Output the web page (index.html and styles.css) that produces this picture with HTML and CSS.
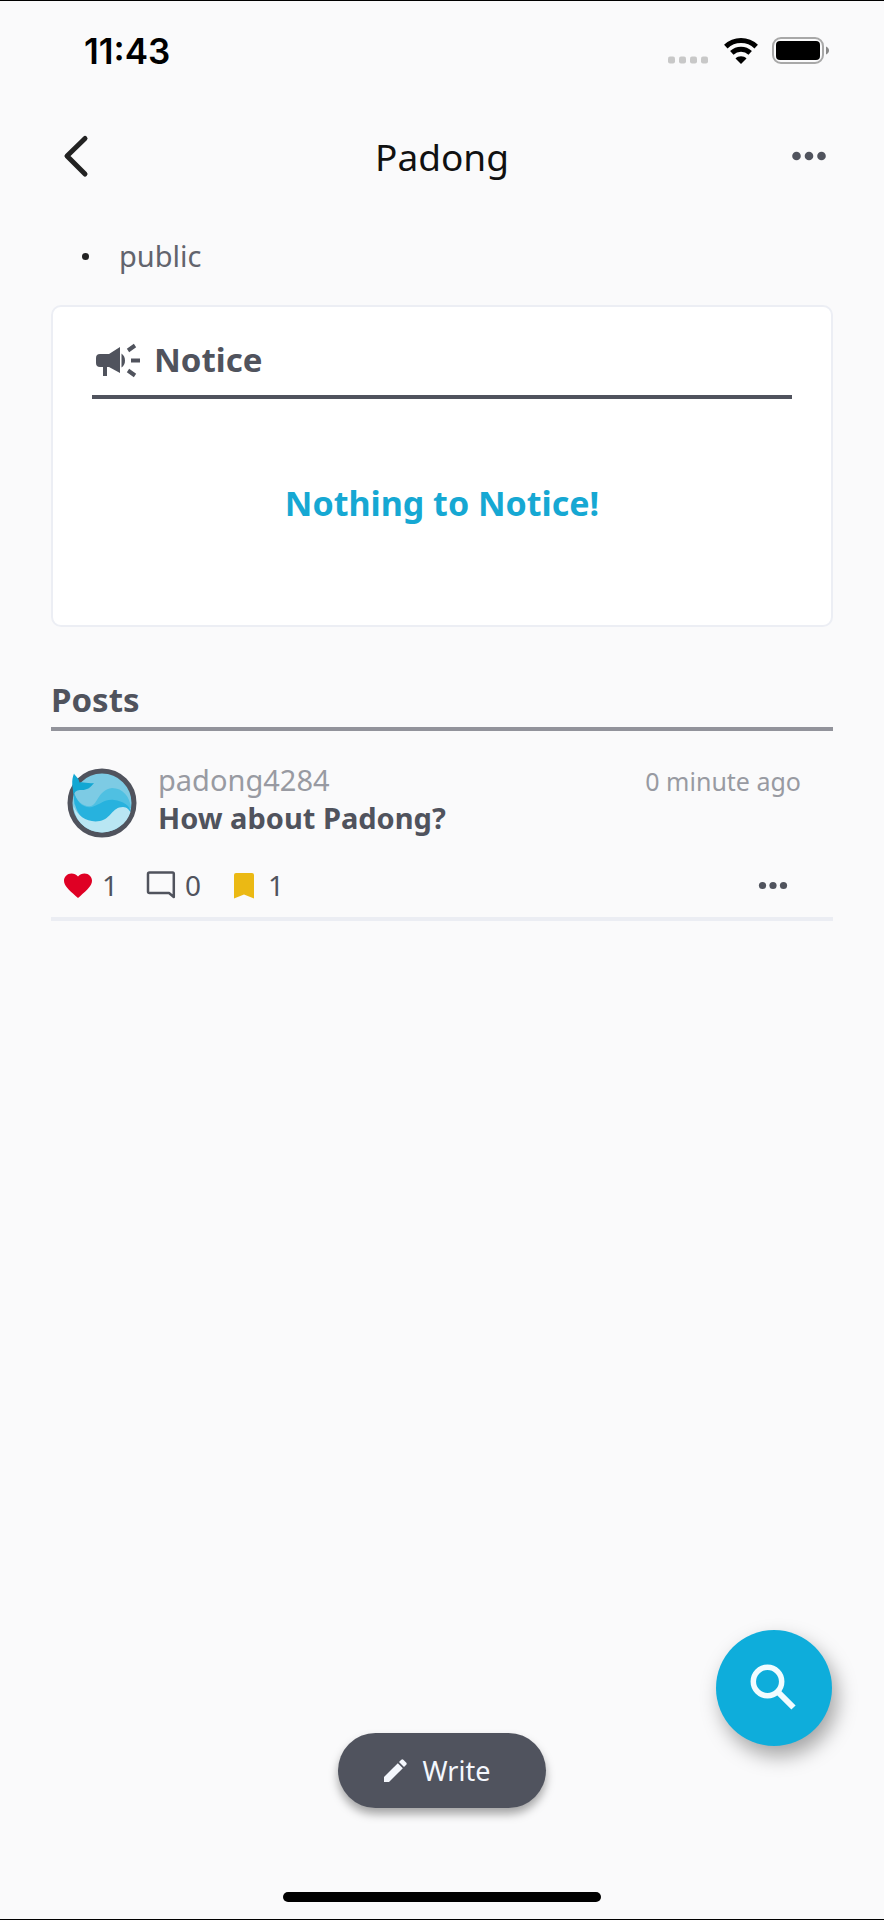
FILE: index.html
```html
<!DOCTYPE html>
<html lang="en">
<head>
<meta charset="utf-8">
<meta name="viewport" content="width=device-width, initial-scale=1">
<title>Padong</title>
<link rel="stylesheet" href="styles.css">
</head>
<body>
<div class="app">
  <div class="status-bar">
    <span class="clock">11:43</span>
    <div class="indicators">
      <svg class="cell" width="42" height="8" viewBox="0 0 42 8" fill="#c8c8c8" aria-hidden="true">
        <rect x="0" y="0.500" width="7" height="7" rx="2"/><rect x="11" y="0.500" width="7" height="7" rx="2"/><rect x="22" y="0.500" width="7" height="7" rx="2"/><rect x="33" y="0.500" width="7" height="7" rx="2"/>
      </svg>
      <svg width="34" height="26" viewBox="0 0 34 26" fill="none" stroke="#000" aria-hidden="true">
        <path d="M1.800 8.600A22 22 0 0 1 32.200 8.600" stroke-width="5"/>
        <path d="M7.800 14.900A13.500 13.500 0 0 1 26.200 14.900" stroke-width="5"/>
        <path d="M17 26L11.500 20.400C14 17.500 20 17.500 22.500 20.400Z" fill="#000" stroke="none"/>
      </svg>
      <svg class="battery" width="58" height="28" viewBox="0 0 58 28" aria-hidden="true">
        <rect x="1" y="1" width="50" height="25" rx="8" fill="none" stroke="#a8a8a8" stroke-width="2"/>
        <rect x="4" y="4" width="44" height="19" rx="4" fill="#000"/>
        <path d="M54 9.500C58 11 58 16 54 17.500Z" fill="#888"/>
      </svg>
    </div>
  </div>

  <header class="header">
    <button class="icon-button" type="button" aria-label="Back">
      <svg width="48" height="48" viewBox="0 0 48 48" fill="none" stroke="#222" stroke-width="5" stroke-linecap="round" stroke-linejoin="round"><path d="M34 6.500L16 24L34 42"/></svg>
    </button>
    <h1 class="title">Padong</h1>
    <button class="icon-button" type="button" aria-label="More options">
      <svg width="48" height="48" viewBox="0 0 48 48" fill="#50535d"><circle cx="11.500" cy="24" r="4.300"/><circle cx="24" cy="24" r="4.300"/><circle cx="36.500" cy="24" r="4.300"/></svg>
    </button>
  </header>

  <main class="content">
    <ul class="tags"><li class="tag">public</li></ul>

    <section class="notice">
      <h2 class="notice-title">
        <svg width="48" height="36" viewBox="-2 0 48 36" fill="#50535d" aria-hidden="true">
          <path d="M6 12H15L26 5V31L15 25H13V34H9V25H6Q2 25 2 21V16Q2 12 6 12Z"/>
          <path d="M27.500 11.500Q31 14 31 18.500Q31 23 27.500 25.500Z"/>
          <path d="M34 8.500L41 3.500M37 18.500H46M34 28.500L41 33.500" fill="none" stroke="#50535d" stroke-width="4"/>
        </svg>
        Notice
      </h2>
      <p class="notice-empty">Nothing to Notice!</p>
    </section>

    <section class="posts">
      <h2 class="posts-title">Posts</h2>
      <article class="post">
        <div class="post-head">
          <svg class="avatar" width="70" height="70" viewBox="0 0 70 70" aria-hidden="true">
            <circle cx="35" cy="35" r="32" fill="#7dcbe4" stroke="#50535d" stroke-width="5"/>
            <path d="M7 25C10 34 17 39 24 38C31 36 31 22 45 20C56 20 63 29 64 40C50 46 20 52 7 36Z" fill="#4fc0e2"/>
            <path d="M6.500 22C9 34 17 41 25 39C35 36 37 31 47 32C56 33 63 38 63.500 43C60 50 44 60 28 58C15 54 6 42 6.500 22Z" fill="#27b2de"/>
            <path d="M6.500 38C11 49 21 55 33 53C44 51 45 39 56 39C60 39 62 42 63.500 44C60 56 48 64 35 64.500C20 64 8 54 6.500 38Z" fill="#b9e6f3"/>
            <path d="M7 5.500C8 8 12 10 12.500 14.500C16 13.500 21 16 27 15C23 20 20 22 15 22C12 22 9 22 6.500 26C5.500 18 4 13 7 5.500Z" fill="#12a7d3"/>
          </svg>
          <div class="post-text">
            <div class="post-meta">
              <span class="author">padong4284</span>
              <time class="time">0 minute ago</time>
            </div>
            <h3 class="post-title">How about Padong?</h3>
          </div>
        </div>
        <div class="post-actions">
          <button class="action" type="button" aria-label="Likes: 1">
            <svg width="30" height="30" viewBox="0 0 30 30" fill="#df0024"><path d="M15 28L12.900 26.200C5.500 19.600 1 15.700 1 10.800C1 6.800 4.200 3.500 8.500 3.500C11 3.500 13.400 4.700 15 6.600C16.600 4.700 19 3.500 21.500 3.500C25.800 3.500 29 6.800 29 10.800C29 15.700 24.500 19.600 17.100 26.200Z"/></svg>
            <span>1</span>
          </button>
          <button class="action" type="button" aria-label="Comments: 0">
            <svg width="30" height="30" viewBox="0 0 30 30" fill="none" stroke="#50535d" stroke-width="2.500" stroke-linejoin="round"><path d="M3.500 2.500H26.500Q27.800 2.500 27.800 4V27L23 23H3.500Q2 23 2 21.500V4Q2 2.500 3.500 2.500Z"/></svg>
            <span>0</span>
          </button>
          <button class="action" type="button" aria-label="Bookmarks: 1">
            <svg width="30" height="30" viewBox="0 0 30 30" fill="#ebb914"><path d="M7 3H23Q25 3 25 5V28.500L15 24.500L5 28.500V5Q5 3 7 3Z"/></svg>
            <span>1</span>
          </button>
          <button class="action more" type="button" aria-label="Post options">
            <svg width="32" height="30" viewBox="0 0 32 30" fill="#50535d"><circle cx="5.500" cy="15.500" r="3.600"/><circle cx="16" cy="15.500" r="3.600"/><circle cx="26.500" cy="15.500" r="3.600"/></svg>
          </button>
        </div>
      </article>
    </section>
  </main>

  <footer class="footer">
    <button class="write" type="button">
      <svg width="28" height="28" viewBox="0 0 28 28" fill="#f4f7fd" aria-hidden="true"><path d="M3 20L16.800 6.200L21.800 11.200L8 25H3Z"/><path d="M18 5L20.300 2.700Q21.300 1.800 22.300 2.700L25.300 5.700Q26.200 6.700 25.300 7.700L23 10Z"/></svg>
      Write
    </button>
    <div class="home-indicator"></div>
  </footer>

  <button class="search-fab" type="button" aria-label="Search">
    <svg width="50" height="50" viewBox="0 0 50 50" fill="none" stroke="#f1fcff"><circle cx="18.500" cy="18.500" r="14.200" stroke-width="5.500"/><path d="M29 29L44.500 44.500" stroke-width="6"/></svg>
  </button>
</div>
</body>
</html>
```
FILE: styles.css
```css
* {
  box-sizing: border-box;
}

body,
h1,
h2,
h3,
p,
ul {
  margin: 0;
  padding: 0;
}

body {
  background: #fafafb;
  color: #50535d;
  font-family: "Noto Sans", "Noto Sans CJK KR", sans-serif;
}

button {
  padding: 0;
  border: 0;
  background: none;
  color: inherit;
  font: inherit;
  cursor: pointer;
}

svg {
  display: block;
  flex: none;
}

.app {
  display: flex;
  flex-direction: column;
  min-height: 100vh;
  border-top: 1px solid #000;
  border-bottom: 1px solid #000;
}

.status-bar {
  display: flex;
  align-items: center;
  justify-content: space-between;
  height: 100px;
  padding: 0 54px 0 84px;
}

.clock {
  color: #000;
  font: 600 35px/40px Inter, sans-serif;
}

.indicators {
  display: flex;
  align-items: center;
  gap: 14px;
}

.cell {
  align-self: flex-end;
  margin-bottom: 1px;
}

.header {
  display: flex;
  align-items: center;
  justify-content: space-between;
  height: 110px;
  padding: 0 51px;
}

.title {
  padding-top: 2px;
  color: #111;
  font-size: 37px;
  font-weight: 400;
  line-height: 48px;
}

.content {
  flex: 1;
  padding: 25px 51px 0;
}

.tags {
  list-style: none;
}

.tag {
  display: flex;
  align-items: center;
  gap: 30px;
  padding-left: 31px;
  color: #62646d;
  font-size: 29px;
  line-height: 40px;
}

.tag::before {
  content: "";
  width: 7px;
  height: 7px;
  border-radius: 50%;
  background: #222;
}

.notice {
  margin-top: 29px;
  padding: 31px 39px 0;
  border: 2px solid #eceef4;
  border-radius: 10px;
  background: #fff;
}

.notice-title {
  display: flex;
  align-items: center;
  gap: 14px;
  padding-bottom: 13px;
  border-bottom: 4px solid #50535d;
  font-size: 33px;
  line-height: 44px;
}

.notice-empty {
  padding: 82px 0 100px;
  color: #16a8d3;
  font-size: 34px;
  font-weight: 700;
  line-height: 44px;
  text-align: center;
}

.posts {
  margin-top: 51px;
}

.posts-title {
  padding-bottom: 5px;
  border-bottom: 4px solid #92939b;
  font-size: 33px;
  line-height: 44px;
}

.post {
  padding: 30px 32px 12px 12px;
  border-bottom: 4px solid #ebedf3;
}

.post-head {
  display: flex;
  gap: 21px;
  padding-left: 4px;
}

.avatar {
  margin-top: 7px;
}

.post-text {
  flex: 1;
}

.post-meta {
  display: flex;
  align-items: baseline;
  justify-content: space-between;
  color: #989aa2;
  font-size: 29px;
  line-height: 38px;
}

.time {
  font-size: 25px;
}

.post-title {
  font-size: 29px;
  line-height: 36px;
}

.post-actions {
  display: flex;
  align-items: center;
  gap: 28px;
  margin-top: 27px;
}

.action {
  display: flex;
  align-items: center;
  gap: 9px;
  font-size: 28px;
  line-height: 40px;
}

.more {
  margin-left: auto;
  margin-right: 12px;
}

.footer {
  display: flex;
  flex-direction: column;
  align-items: center;
  gap: 84px;
  padding-bottom: 17px;
}

.write {
  display: flex;
  align-items: center;
  gap: 14px;
  padding: 20px 56px 19px 43px;
  border-radius: 38px;
  background: #50535e;
  box-shadow: 0 6px 10px rgba(0, 0, 0, 0.35);
  color: #f4f7fd;
  font-size: 27px;
  line-height: 36px;
}

.home-indicator {
  width: 36%;
  height: 10px;
  border-radius: 5px;
  background: #000;
}

.search-fab {
  position: fixed;
  right: 52px;
  bottom: 174px;
  display: grid;
  place-items: center;
  width: 116px;
  height: 116px;
  border-radius: 50%;
  background: #0eaddb;
  box-shadow: 5px 10px 20px rgba(0, 0, 0, 0.35);
}
```
